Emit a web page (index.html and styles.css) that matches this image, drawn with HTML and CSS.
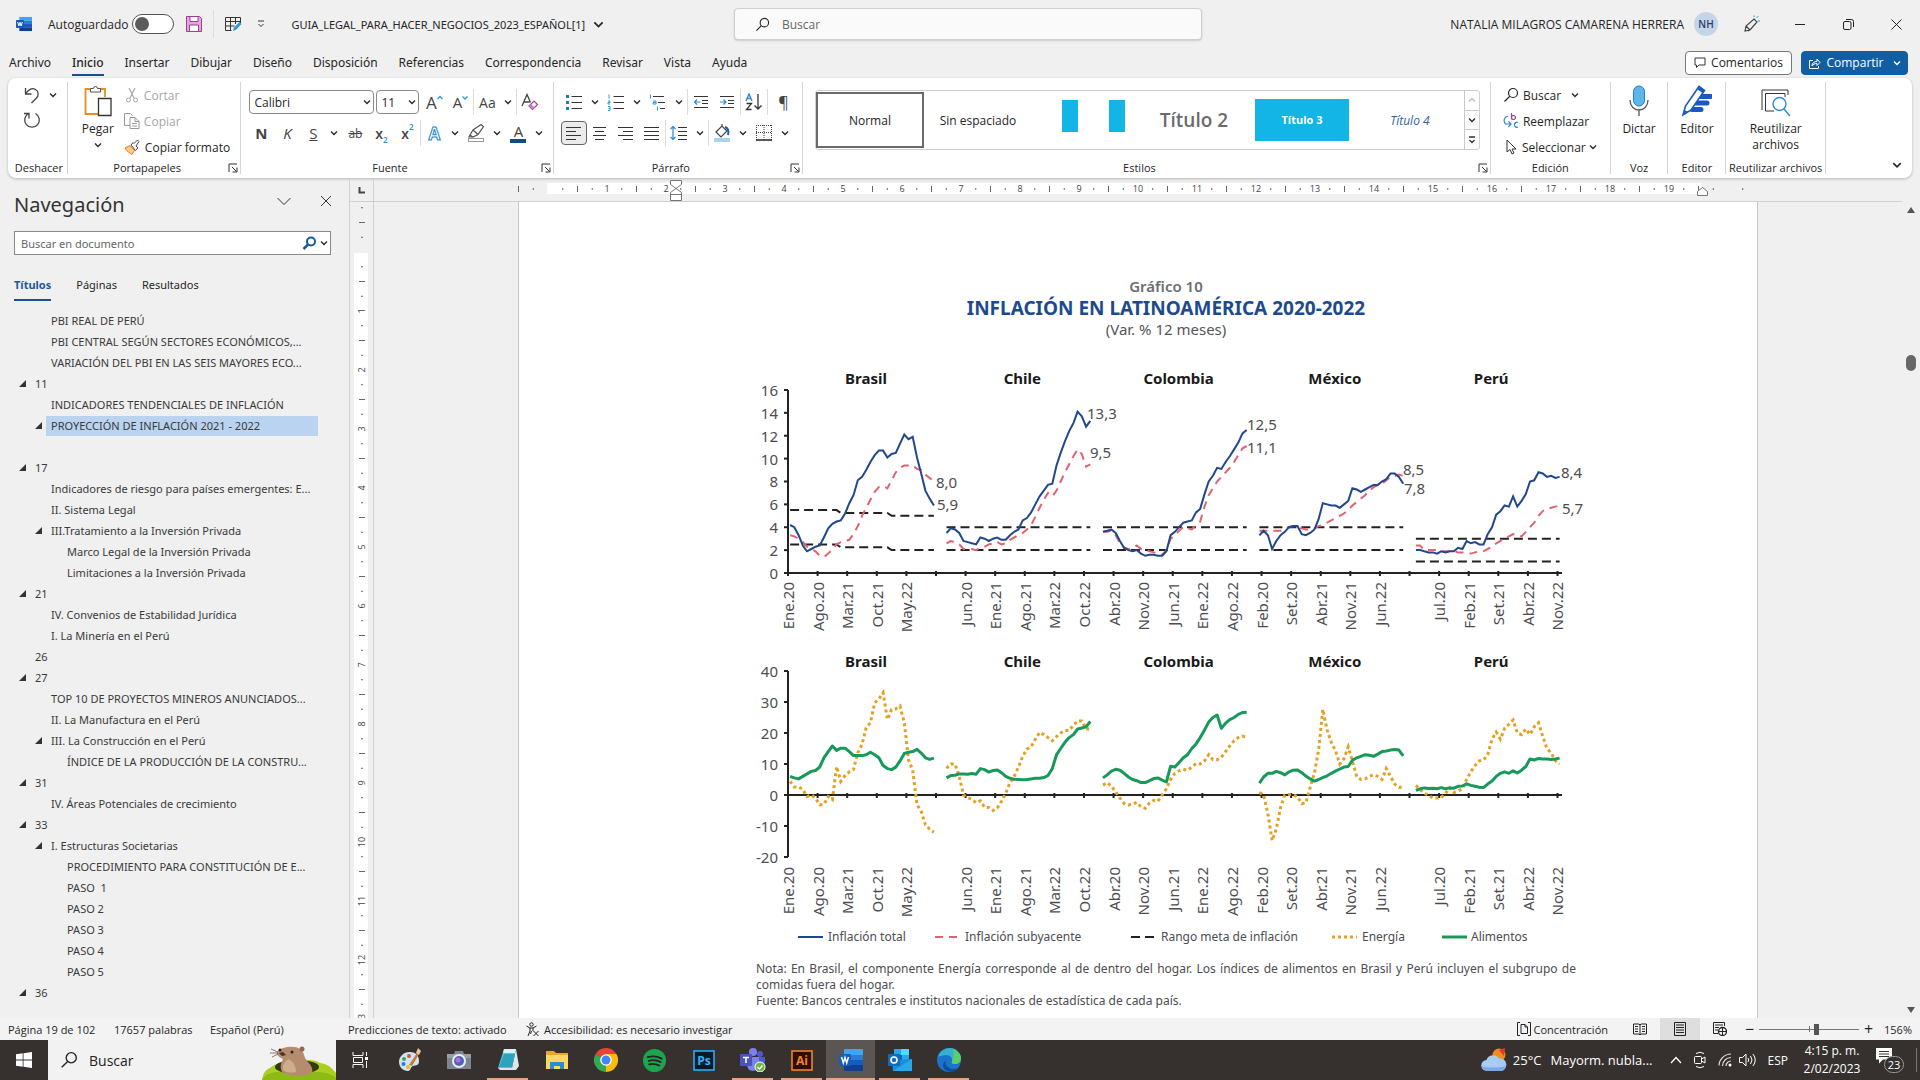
FILE: index.html
```html
<!DOCTYPE html>
<html lang="es">
<head>
  <meta charset="UTF-8" />
  <meta name="viewport" content="width=device-width, initial-scale=1.0" />
  <title>GUIA_LEGAL_PARA_HACER_NEGOCIOS_2023_ESPAÑOL[1]</title>
  <link rel="stylesheet" href="styles.css">
</head>
<body>

  <!-- Iconos compartidos -->
  <svg class="sprite" aria-hidden="true">
    <symbol id="chev" viewBox="0 0 8 8"><path d="M1 2.500 4 5.500 7 2.500" fill="none" stroke="currentColor" stroke-width="1.300"/></symbol>
    <symbol id="launcher" viewBox="0 0 10 10"><path d="M1 9V1h8M4 4l4.500 4.500M9 4.500V9H4.500" fill="none" stroke="#333"/></symbol>
    <symbol id="lupa" viewBox="0 0 16 16"><circle cx="10" cy="6" r="4.500" fill="none" stroke="currentColor" stroke-width="1.200"/><path d="M6.800 9.300 1.500 14.500" stroke="currentColor" stroke-width="1.200"/></symbol>
    <symbol id="word" viewBox="0 0 24 22">
      <path d="M6 0h17a1 1 0 0 1 1 1v5H5V1a1 1 0 0 1 1-1z" fill="#41a5ee"/>
      <path d="M5 6h19v5H5z" fill="#2b7cd3"/><path d="M5 11h19v5H5z" fill="#185abd"/>
      <path d="M5 16h19v5a1 1 0 0 1-1 1H6a1 1 0 0 1-1-1z" fill="#103f91"/>
      <rect y="5" width="12" height="12" rx="1" fill="#185abd"/>
      <path d="M2.500 8 4.300 14 6 8.500 7.700 14 9.500 8" fill="none" stroke="#fff" stroke-width="1.500"/>
    </symbol>
  </svg>

  <header class="titlebar">
    <svg class="app-icon" viewBox="0 0 24 22"><use href="#word"/></svg>
    <label class="autosave">Autoguardado <input type="checkbox" class="toggle"></label>
    <button class="qa qa-save" aria-label="Guardar">
      <svg width="16" height="16" viewBox="0 0 16 16"><path d="M.500.500h13l2 2v13H.500z" fill="#e3a6dc" stroke="#9b3f93"/><path d="M4 .500h8v5H4zM3.500 9h9v6.500h-9z" fill="#fff" stroke="#9b3f93"/></svg>
    </button>
    <span class="qa-sep"></span>
    <button class="qa" aria-label="Dibujar tabla">
      <svg width="17" height="16" viewBox="0 0 17 16"><path d="M.500 1.500h15v4H.500zM.500 5.500v9h6M.500 10h9M5.500 1.500v13M10.500 1.500V8M15.500 5v2" fill="none" stroke="#333"/><path d="M8 15l1-3.500L14.500 6l2 2L11 13.800z" fill="#2c9ad6"/></svg>
    </button>
    <button class="qa" aria-label="Personalizar barra">
      <svg width="8" height="8" viewBox="0 0 8 8"><path d="M1 1h6M1.500 4 4 6.500 6.500 4" fill="none" stroke="#333"/></svg>
    </button>
    <button class="doc-name">GUIA_LEGAL_PARA_HACER_NEGOCIOS_2023_ESPAÑOL[1] <svg width="11" height="11"><use href="#chev"/></svg></button>
    <div class="top-search">
      <svg width="15" height="15"><use href="#lupa"/></svg>
      <input type="text" placeholder="Buscar" aria-label="Buscar">
    </div>
    <div class="account">
      <span>NATALIA MILAGROS CAMARENA HERRERA</span>
      <span class="avatar">NH</span>
    </div>
    <button class="win" aria-label="Novedades"><svg width="18" height="18" viewBox="0 0 18 18"><path d="M2 16l1-5L11 4l3 3-7 8-5 1zM3 11l4 4M5 16l3-2" fill="none" stroke="#444" stroke-width="1.200"/><path d="M11 2V.500M13.500 3l2-2M15 6h2" stroke="#2c9ad6"/></svg></button>
    <button class="win" aria-label="Minimizar"><svg width="10" height="10"><path d="M0 5.500h10" stroke="#222"/></svg></button>
    <button class="win" aria-label="Restaurar"><svg width="11" height="11" viewBox="0 0 11 11"><rect x=".500" y="2.500" width="7.500" height="8" rx="1.500" fill="none" stroke="#222"/><path d="M3 .500h5.500a2 2 0 0 1 2 2V8" fill="none" stroke="#222"/></svg></button>
    <button class="win" aria-label="Cerrar"><svg width="11" height="11" viewBox="0 0 11 11"><path d="M.500.500l10 10M10.500.500l-10 10" stroke="#222"/></svg></button>
  </header>

  <nav class="tabs">
    <a href="#">Archivo</a>
    <a href="#" class="active">Inicio</a>
    <a href="#">Insertar</a>
    <a href="#">Dibujar</a>
    <a href="#">Diseño</a>
    <a href="#">Disposición</a>
    <a href="#">Referencias</a>
    <a href="#">Correspondencia</a>
    <a href="#">Revisar</a>
    <a href="#">Vista</a>
    <a href="#">Ayuda</a>
    <div class="tab-actions">
      <button class="comments"><svg width="12" height="12" viewBox="0 0 12 12"><path d="M1 1h10v7H5l-2.500 2.500V8H1z" fill="none" stroke="#333"/></svg>Comentarios</button>
      <button class="share"><svg width="13" height="13" viewBox="0 0 13 13"><path d="M5 3.500H1.500v8h9V9M4 9c0-3 2-4.500 5-4.500V2l3 3.500L9 8.500V6.500C7 6.500 5 7 4 9z" fill="none" stroke="#fff"/></svg>Compartir<svg width="8" height="8"><use href="#chev"/></svg></button>
    </div>
  </nav>

  <section class="ribbon">
    <div class="group g-undo">
      <div class="group-body undo-body">
        <div class="row">
          <button class="b" aria-label="Deshacer"><svg width="18" height="18" viewBox="0 0 18 18"><path d="M2.500 2v6h6M2.500 8C5 3.500 9 1.500 12.500 3.500S16 10 13 12.500L8.500 17" fill="none" stroke="#444" stroke-width="1.300"/></svg></button>
          <button class="ch" aria-label="Más"><svg width="8" height="8"><use href="#chev"/></svg></button>
        </div>
        <button class="b" aria-label="Rehacer"><svg width="18" height="18" viewBox="0 0 18 18"><path d="M12.500 2.500a7.300 7.300 0 1 1-7 0M1 2.500h5v5" fill="none" stroke="#444" stroke-width="1.300"/></svg></button>
      </div>
      <div class="group-name">Deshacer</div>
    </div>

    <div class="group g-clip">
      <div class="group-body clip-body">
        <button class="big">
          <svg width="28" height="32" viewBox="0 0 28 32"><path d="M6 4H1.500v25H14M16 4h5v8" fill="none" stroke="#ee8b26" stroke-width="1.800"/><path d="M6.500 7V3.500h3a2 2 0 0 1 4 0h3V7z" fill="#fff" stroke="#555"/><path d="M14.500 13.500h12.500v17H14.500z" fill="#fff" stroke="#333" stroke-width="1.300"/></svg>
          <span>Pegar</span>
          <svg width="8" height="8"><use href="#chev"/></svg>
        </button>
        <div class="stack">
          <button class="line off"><svg width="16" height="16" viewBox="0 0 16 16"><path d="M5 1l5 10M11 1 6 11" stroke="#aaa" stroke-width="1.300"/><circle cx="4.500" cy="13" r="2" fill="none" stroke="#aaa"/><circle cx="11.500" cy="13" r="2" fill="none" stroke="#aaa"/></svg>Cortar</button>
          <button class="line off"><svg width="16" height="16" viewBox="0 0 16 16"><path d="M6 12.500H.500v-12h6l2 2M6 4.500h5l4 4v7H6zM11 4.500v4h4M8 10.500h5M8 13h5" fill="none" stroke="#999"/></svg>Copiar</button>
          <button class="line"><svg width="17" height="16" viewBox="0 0 17 16"><path d="M1 9l5-2.500 4.500 5L8 15.500C6 14 3 13 1 9z" fill="#fbc98c" stroke="#e8820c"/><path d="M7 6l4.500 5.500L14 9l-2-2 3-4.500L13.500 1 10 4.500 9 3.500z" fill="#fff" stroke="#444"/></svg>Copiar formato</button>
        </div>
      </div>
      <div class="group-name has-launch">Portapapeles <svg class="launch" width="10" height="10"><use href="#launcher"/></svg></div>
    </div>

    <div class="group g-font">
      <div class="group-body rows">
        <div class="row row-font">
          <span class="combo combo-font"><select aria-label="Fuente"><option>Calibri</option></select><svg width="8" height="8"><use href="#chev"/></svg></span>
          <span class="combo combo-size"><select aria-label="Tamaño"><option>11</option></select><svg width="8" height="8"><use href="#chev"/></svg></span>
          <button class="b glyph">A<svg width="6" height="14" viewBox="0 0 6 14"><path d="M.500 4 3 1.500 5.500 4" fill="none" stroke="#2c9ad6" stroke-width="1.300"/></svg></button>
          <button class="b glyph small">A<svg width="6" height="14" viewBox="0 0 6 14"><path d="M.500 1.500 3 4 5.500 1.500" fill="none" stroke="#2c9ad6" stroke-width="1.300"/></svg></button>
          <span class="sep"></span>
          <button class="b glyph mid">Aa</button>
          <button class="ch" aria-label="Más"><svg width="8" height="8"><use href="#chev"/></svg></button>
          <span class="sep"></span>
          <button class="b" aria-label="Borrar formato"><svg width="18" height="18" viewBox="0 0 18 18"><path d="M1 13 6 1.500l3.500 8M2.500 9h6" fill="none" stroke="#444" stroke-width="1.300"/><path d="M8 13l5-5 3.500 3.500-5 5z" fill="#fff" stroke="#a0449b" stroke-width="1.200"/><path d="M8 13l2-2 3.500 3.500-2 2z" fill="#c37fbf"/></svg></button>
        </div>
        <div class="row row-format">
          <button class="b glyph bold">N</button>
          <button class="b glyph italic">K</button>
          <button class="b glyph under">S</button>
          <button class="ch" aria-label="Más"><svg width="8" height="8"><use href="#chev"/></svg></button>
          <button class="b glyph strike">ab</button>
          <button class="b glyph script">x<sub>2</sub></button>
          <button class="b glyph script">x<sup>2</sup></button>
          <span class="sep"></span>
          <button class="b glyph effect">A</button>
          <button class="ch" aria-label="Más"><svg width="8" height="8"><use href="#chev"/></svg></button>
          <button class="b" aria-label="Resaltar"><svg width="18" height="18" viewBox="0 0 18 18"><path d="M3 11l3-5 8-5.500 2.500 2-5.500 8-5 2.500zM6 6l4.500 4M3 11l-1 2h4" fill="none" stroke="#555" stroke-width="1.200"/><rect x="1.500" y="14.500" width="15" height="3" fill="#fff" stroke="#999"/></svg></button>
          <button class="ch" aria-label="Más"><svg width="8" height="8"><use href="#chev"/></svg></button>
          <button class="b glyph color">A</button>
          <button class="ch" aria-label="Más"><svg width="8" height="8"><use href="#chev"/></svg></button>
        </div>
      </div>
      <div class="group-name has-launch">Fuente <svg class="launch" width="10" height="10"><use href="#launcher"/></svg></div>
    </div>

    <div class="group g-par">
      <div class="group-body rows">
        <div class="row">
          <button class="b" aria-label="Viñetas"><svg width="17" height="17" viewBox="0 0 17 17"><path d="M1 2.500h3M1 8.500h3M1 14.500h3" stroke="#1b7f9e" stroke-width="3"/><path d="M6.500 2.500H17M6.500 8.500H17M6.500 14.500H17" stroke="#333"/></svg></button>
          <button class="ch" aria-label="Más"><svg width="8" height="8"><use href="#chev"/></svg></button>
          <button class="b" aria-label="Numeración"><svg width="17" height="17" viewBox="0 0 17 17"><path d="M2 .500v4M1 7h2v1.500H1V10h2M1 12.500h2v4H1M1.500 14.500H3" fill="none" stroke="#2c9ad6"/><path d="M6.500 2.500H17M6.500 8.500H17M6.500 14.500H17" stroke="#333"/></svg></button>
          <button class="ch" aria-label="Más"><svg width="8" height="8"><use href="#chev"/></svg></button>
          <button class="b" aria-label="Multinivel"><svg width="17" height="17" viewBox="0 0 17 17"><path d="M1.500.500v4M4 7h3v3H4V8.500h3M8.500 12.500v4" fill="none" stroke="#2c9ad6"/><path d="M4 2.500h11M9 8.500h7M11 14.500h5" stroke="#333"/></svg></button>
          <button class="ch" aria-label="Más"><svg width="8" height="8"><use href="#chev"/></svg></button>
          <span class="sep"></span>
          <button class="b" aria-label="Disminuir sangría"><svg width="16" height="14" viewBox="0 0 16 14"><path d="M1 1.500h14M9 5.500h6M9 8.500h6M1 12.500h14" stroke="#333"/><path d="M7.500 7H1.500M4 4.500 1.500 7 4 9.500" fill="none" stroke="#2c8ad6" stroke-width="1.200"/></svg></button>
          <button class="b" aria-label="Aumentar sangría"><svg width="16" height="14" viewBox="0 0 16 14"><path d="M1 1.500h14M9 5.500h6M9 8.500h6M1 12.500h14" stroke="#333"/><path d="M1 7h6M4.500 4.500 7 7 4.500 9.500" fill="none" stroke="#2c8ad6" stroke-width="1.200"/></svg></button>
          <span class="sep"></span>
          <button class="b" aria-label="Ordenar"><svg width="17" height="18" viewBox="0 0 17 18"><path d="M1 8l3-7 3 7M2 5.500h4" fill="none" stroke="#2c8ad6" stroke-width="1.400"/><path d="M1.500 10.500h5l-5 6h5M13 1v15M9.500 12.500 13 16l3.500-3.500" fill="none" stroke="#333" stroke-width="1.300"/></svg></button>
          <span class="sep"></span>
          <button class="b glyph pilcrow">¶</button>
        </div>
        <div class="row">
          <button class="b pressed" aria-label="Alinear a la izquierda"><svg width="15" height="15" viewBox="0 0 15 15"><path d="M0 1.500h15M0 5.500h10M0 9.500h15M0 13.500h10" stroke="#333"/></svg></button>
          <button class="b" aria-label="Centrar"><svg width="15" height="15" viewBox="0 0 15 15"><path d="M1 1.500h13M3 5.500h9M1 9.500h13M3 13.500h9" stroke="#333"/></svg></button>
          <button class="b" aria-label="Alinear a la derecha"><svg width="15" height="15" viewBox="0 0 15 15"><path d="M0 1.500h15M5 5.500h10M0 9.500h15M5 13.500h10" stroke="#333"/></svg></button>
          <button class="b" aria-label="Justificar"><svg width="15" height="15" viewBox="0 0 15 15"><path d="M0 1.500h15M0 5.500h15M0 9.500h15M0 13.500h15" stroke="#333"/></svg></button>
          <span class="sep"></span>
          <button class="b" aria-label="Interlineado"><svg width="17" height="16" viewBox="0 0 17 16"><path d="M8 2.500h9M8 6.500h9M8 10.500h9M8 14.500h9" stroke="#333"/><path d="M3 1v14M.500 4 3 1.500 5.500 4M.500 12 3 14.500 5.500 12" fill="none" stroke="#2c8ad6" stroke-width="1.200"/></svg></button>
          <button class="ch" aria-label="Más"><svg width="8" height="8"><use href="#chev"/></svg></button>
          <span class="sep"></span>
          <button class="b" aria-label="Sombreado"><svg width="18" height="18" viewBox="0 0 18 18"><path d="M3 8l6-6 5 5-6 6zM9 2V0" fill="none" stroke="#444" stroke-width="1.200"/><path d="M12 3c3 1 4 4 3 8" fill="none" stroke="#185abd" stroke-width="2"/><rect x="1" y="14" width="16" height="4" fill="#a9d3ee"/></svg></button>
          <button class="ch" aria-label="Más"><svg width="8" height="8"><use href="#chev"/></svg></button>
          <button class="b" aria-label="Bordes"><svg width="16" height="16" viewBox="0 0 16 16"><path d="M.500 0v15M15.500 0v15M0 .500h16M8 0v15M0 7.500h16" fill="none" stroke="#444" stroke-dasharray="1 1"/><path d="M0 15h16" stroke="#222" stroke-width="1.500"/></svg></button>
          <button class="ch" aria-label="Más"><svg width="8" height="8"><use href="#chev"/></svg></button>
        </div>
      </div>
      <div class="group-name has-launch">Párrafo <svg class="launch" width="10" height="10"><use href="#launcher"/></svg></div>
    </div>

    <div class="group g-styles">
      <div class="group-body">
        <div class="gallery">
          <button class="style selected">Normal</button>
          <button class="style">Sin espaciado</button>
          <button class="style bars" aria-label="Título 1"><i></i><i></i></button>
          <button class="style t2">Título 2</button>
          <button class="style t3"><span>Título 3</span></button>
          <button class="style t4">Título 4</button>
          <div class="gallery-scroll">
            <button disabled aria-label="Arriba"><svg class="flip" width="8" height="8"><use href="#chev"/></svg></button>
            <button aria-label="Abajo"><svg width="8" height="8"><use href="#chev"/></svg></button>
            <button aria-label="Más estilos"><svg width="8" height="8" viewBox="0 0 8 8"><path d="M1 1h6M1.500 4 4 6.500 6.500 4" fill="none" stroke="#333" stroke-width="1.300"/></svg></button>
          </div>
        </div>
      </div>
      <div class="group-name has-launch">Estilos <svg class="launch" width="10" height="10"><use href="#launcher"/></svg></div>
    </div>

    <div class="group g-edit">
      <div class="group-body">
        <div class="stack">
          <button class="line"><svg width="16" height="16"><use href="#lupa"/></svg>Buscar<svg class="far" width="8" height="8"><use href="#chev"/></svg></button>
          <button class="line"><svg width="16" height="16" viewBox="0 0 16 16"><path d="M8.500 0v6.500M8.500 4a2 2 0 1 1 0 1" fill="none" stroke="#a0449b" stroke-width="1.200"/><path d="M15 9.500a2.500 2.500 0 1 0 0 4.500M5 3C1 4 0 8 2.500 11h5M5.500 8.500 8 11l-2.500 3" fill="none" stroke="#2c8ad6" stroke-width="1.200"/></svg>Reemplazar</button>
          <button class="line tight"><svg width="16" height="16" viewBox="0 0 16 16"><path d="M4 1v12l3-2.500 2 4.500 2-1-2-4h4z" fill="#fff" stroke="#333"/></svg>Seleccionar<svg width="8" height="8"><use href="#chev"/></svg></button>
        </div>
      </div>
      <div class="group-name">Edición</div>
    </div>

    <div class="group g-small">
      <div class="group-body">
        <button class="big">
          <svg width="20" height="32" viewBox="0 0 20 32"><rect x="4.500" y="1" width="11" height="20" rx="5.500" fill="#5db6ea" stroke="#2281c4"/><path d="M1 15c0 6 4 10 9 10s9-4 9-10M10 25v6" fill="none" stroke="#555" stroke-width="1.300"/></svg>
          <span>Dictar</span>
        </button>
      </div>
      <div class="group-name">Voz</div>
    </div>

    <div class="group g-small">
      <div class="group-body">
        <button class="big">
          <svg width="30" height="32" viewBox="0 0 30 32"><path d="M18 11.500h11M14 18h11M10 24.500h9" stroke="#185abd" stroke-width="5" stroke-linecap="round"/><path d="M1 30l2.500-9L17 1.500l5.500 4L9 25z" fill="#fff" stroke="#185abd" stroke-width="1.600"/><path d="M1 30l1.500-5 3.500 2zM15 4l2-3 5.500 4-2 3z" fill="#185abd"/></svg>
          <span>Editor</span>
        </button>
      </div>
      <div class="group-name">Editor</div>
    </div>

    <div class="group g-reuse">
      <div class="group-body">
        <button class="big">
          <svg width="30" height="32" viewBox="0 0 30 32"><path d="M1 25V5h26v5" fill="none" stroke="#333"/><path d="M13 26H4.500V8.500H24V12" fill="none" stroke="#333"/><circle cx="18.500" cy="19" r="6.500" fill="#fff" stroke="#2c8ad6" stroke-width="1.400"/><path d="M23 24l6 7" stroke="#2c8ad6" stroke-width="1.400"/></svg>
          <span>Reutilizar<br>archivos</span>
        </button>
      </div>
      <div class="group-name">Reutilizar archivos</div>
    </div>
    <button class="collapse" aria-label="Contraer"><svg width="10" height="10"><use href="#chev"/></svg></button>
  </section>

  <main class="workspace">
    <aside class="nav-pane">
      <div class="nav-head">
        <h2>Navegación</h2>
        <button aria-label="Opciones"><svg width="16" height="16" viewBox="0 0 16 16"><path d="M1.500 5 8 11.500 14.500 5" fill="none" stroke="#333"/></svg></button>
        <button aria-label="Cerrar panel"><svg width="12" height="12" viewBox="0 0 12 12"><path d="M1 1l10 10M11 1 1 11" stroke="#333"/></svg></button>
      </div>
      <div class="nav-search">
        <input type="text" placeholder="Buscar en documento" aria-label="Buscar en documento">
        <svg class="find" width="15" height="15" viewBox="0 0 15 15"><circle cx="9" cy="5.500" r="4" fill="none" stroke="#185a9d" stroke-width="2"/><path d="M6 8.500 1.500 13" stroke="#185a9d" stroke-width="2.500"/></svg>
        <svg width="8" height="8"><use href="#chev"/></svg>
      </div>
      <div class="nav-tabs">
        <a href="#" class="active">Títulos</a>
        <a href="#">Páginas</a>
        <a href="#">Resultados</a>
      </div>
      <ul class="tree">
        <li class="l2"><a href="#">PBI REAL DE PERÚ</a></li>
        <li class="l2"><a href="#">PBI CENTRAL SEGÚN SECTORES ECONÓMICOS,...</a></li>
        <li class="l2"><a href="#">VARIACIÓN DEL PBI EN LAS SEIS MAYORES ECO...</a></li>
        <li class="l1 open"><a href="#">11</a></li>
        <li class="l2"><a href="#">INDICADORES TENDENCIALES DE INFLACIÓN</a></li>
        <li class="l2 open current"><a href="#">PROYECCIÓN DE INFLACIÓN 2021 - 2022</a></li>
        <li></li>
        <li class="l1 open"><a href="#">17</a></li>
        <li class="l2"><a href="#">Indicadores de riesgo para países emergentes: E...</a></li>
        <li class="l2"><a href="#">II. Sistema Legal</a></li>
        <li class="l2 open"><a href="#">III.Tratamiento a la Inversión Privada</a></li>
        <li class="l3"><a href="#">Marco Legal de la Inversión Privada</a></li>
        <li class="l3"><a href="#">Limitaciones a la Inversión Privada</a></li>
        <li class="l1 open"><a href="#">21</a></li>
        <li class="l2"><a href="#">IV. Convenios de Estabilidad Jurídica</a></li>
        <li class="l2"><a href="#">I. La Minería en el Perú</a></li>
        <li class="l1"><a href="#">26</a></li>
        <li class="l1 open"><a href="#">27</a></li>
        <li class="l2"><a href="#">TOP 10 DE PROYECTOS MINEROS ANUNCIADOS...</a></li>
        <li class="l2"><a href="#">II. La Manufactura en el Perú</a></li>
        <li class="l2 open"><a href="#">III. La Construcción en el Perú</a></li>
        <li class="l3"><a href="#">ÍNDICE DE LA PRODUCCIÓN DE LA CONSTRU...</a></li>
        <li class="l1 open"><a href="#">31</a></li>
        <li class="l2"><a href="#">IV. Áreas Potenciales de crecimiento</a></li>
        <li class="l1 open"><a href="#">33</a></li>
        <li class="l2 open"><a href="#">I. Estructuras Societarias</a></li>
        <li class="l3"><a href="#">PROCEDIMIENTO PARA CONSTITUCIÓN DE E...</a></li>
        <li class="l3"><a href="#">PASO&nbsp; 1</a></li>
        <li class="l3"><a href="#">PASO 2</a></li>
        <li class="l3"><a href="#">PASO 3</a></li>
        <li class="l3"><a href="#">PASO 4</a></li>
        <li class="l3"><a href="#">PASO 5</a></li>
        <li class="l1 open"><a href="#">36</a></li>
      </ul>
    </aside>

    <div class="v-ruler">
      <div class="corner"><svg width="7" height="7"><path d="M1.500 0v5.500H7" fill="none" stroke="#444" stroke-width="2"/></svg></div>
      <svg id="rulerV" width="24" height="816"></svg>
    </div>

    <div class="canvas">
      <div class="h-ruler"><svg id="rulerH" width="1240" height="21"></svg></div>
      <article class="page">
        <h3>Gráfico 10</h3>
        <h1>INFLACIÓN EN LATINOAMÉRICA 2020-2022</h1>
        <p class="unit">(Var. % 12 meses)</p>
        <svg id="charts" class="charts" width="860" height="614" viewBox="0 0 860 614"></svg>
        <div class="notes">
          <p>Nota: En Brasil, el componente Energía corresponde al de dentro del hogar. Los índices de alimentos en Brasil y Perú incluyen el subgrupo de comidas fuera del hogar.</p>
          <p>Fuente: Bancos centrales e institutos nacionales de estadística de cada país.</p>
        </div>
      </article>
    </div>

    <div class="scrollbar">
      <svg width="10" height="8"><path d="M5 1l4 6H1z" fill="#555"/></svg>
      <span class="thumb"></span>
      <svg class="down" width="10" height="8"><path d="M5 7 1 1h8z" fill="#555"/></svg>
    </div>
  </main>

  <footer class="status">
    <span class="s-page">Página 19 de 102</span>
    <span class="s-words">17657 palabras</span>
    <span class="s-lang">Español (Perú)</span>
    <span class="s-pred">Predicciones de texto: activado</span>
    <span class="s-acc"><svg width="15" height="15" viewBox="0 0 15 15"><circle cx="6.500" cy="2.500" r="1.700" fill="none" stroke="#222"/><path d="M1.500 4l3.500 2v3l-2 5M11.500 4 8 6v3M5 6h3M6.500 9l-1 3M8.500 9l5 5M13.500 9l-5 5" fill="none" stroke="#222"/></svg>Accesibilidad: es necesario investigar</span>
    <div class="views">
      <button class="focus"><svg width="14" height="14" viewBox="0 0 14 14"><path d="M3 .500H.500v13H3M11 .500h2.500v13H11M4 2.500h4l2.500 2.500v6.500H4zM8 2.500V5h2.500" fill="none" stroke="#222"/></svg>Concentración</button>
      <button class="view" aria-label="Lectura"><svg width="14" height="13" viewBox="0 0 14 13"><path d="M.500 1H6l1 1 1-1h5.500v10H8l-1 1-1-1H.500zM7 2v10M2 3.500h3M2 6h3M2 8.500h3M9 3.500h3M9 6h3M9 8.500h3" fill="none" stroke="#222"/></svg></button>
      <button class="view on" aria-label="Diseño de impresión"><svg width="12" height="14" viewBox="0 0 12 14"><path d="M.500.500h11v13H.500zM2 3h8M2 5.500h8M2 8h8M2 10.500h8" fill="none" stroke="#222"/></svg></button>
      <button class="view" aria-label="Diseño web"><svg width="14" height="14" viewBox="0 0 14 14"><path d="M5 11.500H.500v-11h11V4M2 3h8M2 5.500h4M2 8h3" fill="none" stroke="#222"/><circle cx="9.500" cy="9.500" r="4" fill="#f3f3f3" stroke="#222" stroke-width="1.300"/><path d="M5.500 9.500h8M9.500 5.500v8" stroke="#222"/></svg></button>
      <button class="step">−</button>
      <input type="range" class="zoom" min="10" max="190" value="114" aria-label="Zoom">
      <button class="step">+</button>
      <button class="pct">156%</button>
    </div>
  </footer>

  <div class="taskbar">
    <button class="start" aria-label="Inicio"><svg width="16" height="16" viewBox="0 0 16 16"><path d="M0 2.300 6.700 1.300v6.200H0zM7.500 1.200 16 0v7.500H7.500zM0 8.400h6.700v6.300L0 13.700zM7.500 8.400H16V16l-8.500-1.200z" fill="#fff"/></svg></button>
    <div class="task-search">
      <svg width="18" height="18"><use href="#lupa"/></svg>
      <input type="text" placeholder="Buscar" aria-label="Buscar en Windows">
      <svg class="marmot" width="74" height="34" viewBox="0 0 74 34">
        <path d="M0 34c1-6 3-10 8-12 5-4 12-7 22-7 12-2 22-2 28 2 8 1 12 5 16 10v7z" fill="#a9cf1f"/>
        <path d="M0 34c2-5 8-7 14-8h44c8 1 13 3 16 6v2z" fill="#8dba15"/>
        <ellipse cx="35" cy="21" rx="22" ry="7" fill="#35380f"/>
        <path d="M20 26c-3-7 0-10 1-13-4-2-8-5-5-8 3-4 17-6 22-2 5 3 3 8 8 13 4 4 5 8 4 11-8 4-22 4-30-1z" fill="#b58d6e"/>
        <path d="M21 24c-1-5 2-8 5-11 5 2 8 7 8 13-4 1-10 1-13-2z" fill="#cfae90"/>
        <circle cx="18" cy="4" r="1.500" fill="#2b211b"/><circle cx="30" cy="6" r="1.500" fill="#2b211b"/><circle cx="40" cy="3" r="2.500" fill="#8e6a50"/>
        <path d="M17 7l4-1 3 3-4 1z" fill="#4a3128"/><path d="M9 3l7 3M8 7h8M10 11l6-3" stroke="#5b4034" stroke-width=".700"/>
      </svg>
    </div>
    <div class="apps">
      <button class="app" aria-label="Vista de tareas"><svg width="17" height="16" viewBox="0 0 17 16"><path d="M1 0v3.500h10V0M1 16v-3.500h10V16M1.500 5.500h9v5h-9zM14.500 0v4M14.500 9v7" fill="none" stroke="#fff"/><rect x="13" y="5" width="3" height="3" fill="#fff"/></svg></button>
      <button class="app" aria-label="Paint"><svg width="24" height="24" viewBox="0 0 24 24"><path d="M12 4C5 4 1 9 1 14s4 9 9 9c3 0 2-4 5-5s6 0 6-5c0-6-4-9-9-9z" fill="#cfe4f2"/><circle cx="6" cy="11" r="2" fill="#3aa655"/><circle cx="11" cy="8" r="2" fill="#e9483f"/><circle cx="5.500" cy="16" r="2" fill="#2a7de1"/><circle cx="10" cy="19" r="2" fill="#f5b921"/><path d="M11 17 19 5l2 1-7 12z" fill="#c47b3a"/><path d="M18 5l2-5 3 3-2 4z" fill="#eac79b"/></svg></button>
      <button class="app" aria-label="Cámara"><svg width="24" height="24" viewBox="0 0 24 24"><path d="M8 3h8l1 3h7v15H0V6h7z" fill="#7d858e"/><path d="M0 6h24v4H0z" fill="#97a0a9"/><circle cx="12" cy="13" r="7" fill="#eceff2"/><circle cx="12" cy="13" r="5" fill="#4d63b8"/><circle cx="11" cy="12" r="2.500" fill="#b46fd0"/></svg></button>
      <button class="app running" aria-label="Notas"><svg width="24" height="24" viewBox="0 0 24 24"><path d="M8 1h12l-4 19H2z" fill="#5cc3d6"/><path d="M8 1h12l-1 4H7z" fill="#d9f2f6"/><path d="M20 1l3 17-3 4H4l-2-2h14z" fill="#dfe6e8"/><path d="M3 19 8 6h11l-3 13z" fill="#2fa3bd"/></svg></button>
      <button class="app" aria-label="Explorador"><svg width="22" height="20" viewBox="0 0 22 20"><path d="M0 1h8l2 2h12v16H0z" fill="#e9a825"/><path d="M0 5h22v14H0z" fill="#ffd766"/><path d="M4 19v-7h14v7h-4v-3H8v3z" fill="#2e8bd0"/></svg></button>
      <button class="app" aria-label="Chrome"><svg width="24" height="24" viewBox="0 0 24 24"><path d="M12 12 1.600 6A12 12 0 0 1 22.400 6z" fill="#ea4335"/><path d="M12 12 22.400 6A12 12 0 0 1 12 24z" fill="#fbbc05"/><path d="M12 12v12A12 12 0 0 1 1.600 6z" fill="#34a853"/><path d="M12 6h10.400L17 15z" fill="#fbbc05"/><circle cx="12" cy="12" r="5.800" fill="#fff"/><circle cx="12" cy="12" r="4.500" fill="#4285f4"/></svg></button>
      <button class="app" aria-label="Spotify"><svg width="23" height="23" viewBox="0 0 24 24"><circle cx="12" cy="12" r="12" fill="#1ca54e"/><path d="M5 8.500c5-1.500 10-1 14.500 1.500M6 12.300c4-1.200 8.500-.800 12.300 1.300M6.500 16c3.500-1 7-.600 10.500 1.200" fill="none" stroke="#222" stroke-width="1.900" stroke-linecap="round"/></svg></button>
      <button class="app" aria-label="Photoshop"><svg width="22" height="21" viewBox="0 0 22 21"><rect x="1" y="1" width="20" height="19" fill="#06182a" stroke="#23b1f0" stroke-width="1.600"/><text x="11" y="15" class="logo" fill="#31b5f5">Ps</text></svg></button>
      <button class="app running" aria-label="Teams"><svg width="26" height="24" viewBox="0 0 26 24"><circle cx="20" cy="6" r="3" fill="#5059c9"/><circle cx="13" cy="4" r="4" fill="#7b83eb"/><path d="M16 9h9v7a4.500 4.500 0 0 1-9 0z" fill="#5059c9"/><path d="M7 9h12v8a6 6 0 0 1-12 0z" fill="#7b83eb"/><rect x="0" y="6" width="12" height="12" rx="1" fill="#4b53bc"/><path d="M3 9.500h6M6 9.500V15" stroke="#fff" stroke-width="1.600"/><circle cx="20" cy="19" r="5" fill="#6bb544" stroke="#fff"/><path d="M17.500 19l2 2 3-3.500" fill="none" stroke="#fff" stroke-width="1.400"/></svg></button>
      <button class="app running" aria-label="Illustrator"><svg width="22" height="21" viewBox="0 0 22 21"><rect x="1" y="1" width="20" height="19" fill="#2b0f04" stroke="#f58220" stroke-width="1.600"/><text x="11" y="15" class="logo" fill="#f58220">Ai</text></svg></button>
      <button class="app running focused" aria-label="Word"><svg width="24" height="22"><use href="#word"/></svg></button>
      <button class="app running" aria-label="Outlook"><svg width="24" height="22" viewBox="0 0 24 22"><path d="M6 0h15v13H6z" fill="#28a8ea"/><path d="M13 0h8v6h-8z" fill="#50d9ff"/><path d="M6 6h8v7H6z" fill="#0364b8"/><path d="M4 11l20-1v11a1 1 0 0 1-1 1H5z" fill="#1490df"/><path d="M24 10 5 22h18a1 1 0 0 0 1-1z" fill="#28a8ea"/><rect y="5" width="12" height="12" rx="1" fill="#0f6cbd"/><circle cx="6" cy="11" r="3" fill="none" stroke="#fff" stroke-width="1.600"/></svg></button>
      <button class="app running" aria-label="Edge"><svg width="24" height="24" viewBox="0 0 24 24"><circle cx="12" cy="12" r="12" fill="#1b74c9"/><path d="M1 9C3 3 8 0 13 0c6 0 11 5 11 10 0 4-3 6-6 6-3 0-4-1-3-3 1-3-2-6-6-6-3 0-6 1-8 2z" fill="#35b1d0"/><path d="M16 1c5 2 8 6 8 9 0 4-3 6-6 6-3 0-4-1-3-3 2-4 2-8 1-12z" fill="#5bd06a"/><path d="M9 12c-2 5 2 9 7 9 3 0 5-1 6-2-3 5-8 6-12 4-5-2-5-8-1-11z" fill="#0c4f9e"/></svg></button>
    </div>
    <div class="tray">
      <svg width="26" height="24" viewBox="0 0 26 24"><circle cx="18" cy="7" r="6.500" fill="#f38b1e"/><path d="M18 2l6-2-1 8z" fill="#e5382a"/><path d="M6 23a5.500 5.500 0 0 1-.500-11A7 7 0 0 1 18 10.500 6 6 0 0 1 20 23z" fill="#a9cdf2"/><path d="M6 23c-3-1-5-3-5-5 5 2 16 2 24 0-1 3-3 5-5 5z" fill="#7ba9e3"/></svg>
      <span class="weather">25°C</span>
      <span class="weather desc">Mayorm. nubla...</span>
      <svg class="up" width="12" height="8" viewBox="0 0 12 8"><path d="M1 7l5-5.500L11 7" fill="none" stroke="#fff" stroke-width="1.300"/></svg>
      <svg class="meet" width="12" height="18" viewBox="0 0 12 18"><rect x=".500" y="5.500" width="7" height="7" rx="1" fill="none" stroke="#fff"/><path d="M7.500 8 11 6v6L7.500 10M2 2.500Q6 0 10 2.500M2 15.500q4 2.500 8 0" fill="none" stroke="#fff"/></svg>
      <svg class="wifi" width="14" height="14" viewBox="0 0 14 14"><path d="M1 12.500A12 12 0 0 1 13 1M4.500 13A8.500 8.500 0 0 1 13 4.500M8 13a5 5 0 0 1 5-5" fill="none" stroke="#ddd" stroke-width="1.200"/><circle cx="12" cy="12" r="1.500" fill="#fff"/></svg>
      <svg class="vol" width="17" height="14" viewBox="0 0 17 14"><path d="M.500 4.500h3L7 1v12L3.500 9.500h-3zM9 5q1.500 2 0 4M11.500 3q3 4 0 8M14 1q4.500 6 0 12" fill="none" stroke="#fff"/></svg>
      <span class="lang">ESP</span>
      <span class="clock">4:15 p. m.<br>2/02/2023</span>
      <span class="notif"><svg width="17" height="17" viewBox="0 0 17 17"><path d="M0 0h16v11.500H7L3 15.500V11.500H0z" fill="#fff"/><path d="M3 3.500h10M3 6h10M3 8.500h10" stroke="#36312f"/></svg><b>23</b></span>
    </div>
  </div>

  <script src="script.js"></script>
</body>
</html>
```
FILE: styles.css
```css
* {
  box-sizing: border-box;
}

body {
  margin: 0;
  height: 100vh;
  display: flex;
  flex-direction: column;
  overflow: hidden;
  font-family: "Open Sans", "Noto Sans", sans-serif;
  font-size: 12px;
  color: #262626;
  background: #f0f0f0;
}

button,
input,
select {
  font: inherit;
  color: inherit;
}

button {
  display: flex;
  align-items: center;
  justify-content: center;
  padding: 0;
  border: none;
  background: none;
  white-space: nowrap;
}

a {
  color: inherit;
  text-decoration: none;
}

svg {
  flex: none;
}

.sprite {
  position: absolute;
  width: 0;
  height: 0;
}

/* Barra de título */
.titlebar {
  position: relative;
  display: flex;
  align-items: center;
  height: 48px;
  padding-left: 16px;
  flex: none;
}

.app-icon {
  width: 16px;
  height: 16px;
  margin-right: 16px;
}

.autosave {
  display: flex;
  align-items: center;
  gap: 4px;
  margin-right: 6px;
}

.toggle {
  appearance: none;
  width: 42px;
  height: 20px;
  margin: 0;
  border: 1px solid #555;
  border-radius: 10px;
  background: #fff;
}

.toggle::before {
  content: "";
  display: block;
  width: 14px;
  height: 14px;
  margin: 2px;
  border-radius: 50%;
  background: #5c5c5c;
}

.qa {
  width: 28px;
  height: 28px;
}

.qa-sep {
  width: 1px;
  height: 28px;
  margin: 0 5px;
  background: #dcdcdc;
}

.doc-name {
  gap: 8px;
  margin-left: 16px;
  font-family: "Noto Sans", sans-serif;
  font-size: 11px;
}

.top-search {
  position: absolute;
  left: 50%;
  top: 8px;
  width: 468px;
  height: 32px;
  margin-left: -226px;
  display: flex;
  align-items: center;
  gap: 12px;
  padding-left: 20px;
  background: #fafafa;
  border: 1px solid #cfcfcf;
  border-radius: 4px;
  box-shadow: 0 1px 2px rgba(0, 0, 0, 0.15);
}

.top-search input,
.nav-search input,
.task-search input {
  flex: 1;
  min-width: 0;
  padding: 0;
  border: none;
  background: none;
}

.top-search input::placeholder,
.nav-search input::placeholder {
  color: #666;
}

.account {
  display: flex;
  align-items: center;
  gap: 10px;
  margin-left: auto;
  margin-right: 10px;
}

.avatar {
  width: 24px;
  height: 24px;
  line-height: 24px;
  border-radius: 50%;
  background: #c5d5e8;
  color: #1f3f6e;
  font-size: 10px;
  font-weight: 600;
  text-align: center;
}

.win {
  width: 48px;
  height: 48px;
}

/* Pestañas */
.tabs {
  display: flex;
  gap: 21px;
  height: 30px;
  padding: 0 12px 3px 9px;
  flex: none;
  font-family: "Noto Sans", sans-serif;
  line-height: 30px;
}

.tabs .active {
  height: 28px;
  font-weight: 500;
  border-bottom: 2px solid #1b4f8f;
}

.tab-actions {
  display: flex;
  gap: 9px;
  margin-left: auto;
  margin-top: 3px;
  font-family: "Open Sans", sans-serif;
}

.comments,
.share {
  gap: 5px;
  width: 107px;
  height: 24px;
  border: 1px solid #777;
  border-radius: 4px;
  background: #fff;
}

.share {
  border-color: #115ea3;
  background: #115ea3;
  color: #fff;
}

.share svg:last-child {
  margin-left: 4px;
}

/* Cinta */
.ribbon {
  display: flex;
  flex: none;
  height: 100px;
  margin: 0 8px 2px;
  padding-top: 4px;
  background: #fff;
  border-radius: 8px;
  box-shadow: 0 1px 3px rgba(0, 0, 0, 0.25);
}

.group {
  display: flex;
  flex-direction: column;
  height: 92px;
  border-right: 1px solid #d4d4d4;
}

.group-body {
  display: flex;
  height: 76px;
  flex: none;
}

.group-name {
  position: relative;
  height: 20px;
  line-height: 20px;
  flex: none;
  text-align: center;
  font-size: 11px;
  white-space: nowrap;
}

.has-launch {
  padding-right: 14px;
}

.launch {
  position: absolute;
  right: 2px;
  top: 5px;
}

.g-undo {
  width: 60px;
  padding-left: 3px;
}

.g-clip {
  width: 174px;
}

.g-font {
  width: 313px;
}

.g-par {
  width: 250px;
}

.g-styles {
  flex: 1;
}

.g-edit {
  width: 120px;
}

.g-small {
  width: 58px;
}

.g-reuse {
  width: 100px;
}

.row {
  display: flex;
  align-items: center;
  height: 26px;
}

.rows {
  flex-direction: column;
  gap: 5px;
  padding: 7px 0 0 7px;
}

.b {
  width: 26px;
  height: 24px;
}

.ch {
  width: 16px;
  height: 24px;
}

.sep {
  width: 1px;
  height: 26px;
  background: #dcdcdc;
}

.undo-body {
  flex-direction: column;
  padding-left: 8px;
}

.clip-body {
  padding-left: 10px;
}

.big {
  flex: 1;
  flex-direction: column;
  justify-content: flex-start;
  gap: 4px;
  padding-top: 3px;
  line-height: 16px;
}

.clip-body .big {
  flex: none;
  width: 40px;
}

.stack {
  display: flex;
  flex-direction: column;
  padding-left: 6px;
}

.line {
  justify-content: flex-start;
  gap: 4px;
  height: 26px;
  flex: none;
}

.tight {
  gap: 3px;
}

.off {
  color: #a6a6a6;
}

.g-edit .stack {
  padding-left: 12px;
}

.far {
  margin-left: 6px;
}

.combo {
  position: relative;
  height: 24px;
}

.combo select {
  appearance: none;
  width: 100%;
  height: 24px;
  padding: 0 4px;
  border: 1px solid #8a8a8a;
  border-radius: 4px;
  background: #fff;
}

.combo svg {
  position: absolute;
  right: 3px;
  top: 8px;
}

.combo-font {
  width: 125px;
  margin-right: 2px;
}

.combo-size {
  width: 43px;
  margin-right: 2px;
}

.row-font {
  padding-left: 1px;
}

.glyph {
  font-size: 17px;
  color: #444;
}

.small {
  font-size: 15px;
}

.mid {
  font-size: 14px;
}

.bold {
  font-size: 15px;
  font-weight: 700;
}

.italic {
  font-size: 15px;
  font-style: italic;
}

.under {
  font-size: 15px;
  text-decoration: underline;
}

.strike {
  font-size: 12px;
  text-decoration: line-through;
}

.script {
  font-size: 14px;
  font-weight: 600;
}

.script sub,
.script sup {
  font-size: 8px;
  color: #2c8ad6;
}

.script sub {
  align-self: flex-end;
}

.script sup {
  align-self: flex-start;
}

.effect {
  font-weight: 700;
  color: #fff;
  -webkit-text-stroke: 1px #1b86c9;
}

.color {
  height: 20px;
  line-height: 16px;
  font-size: 15px;
  border-bottom: 4px solid #124c82;
  width: 16px;
  margin: 0 5px;
}

.pilcrow {
  margin-left: 3px;
  font-size: 16px;
}

.pressed {
  border: 1px solid #666;
  border-radius: 4px;
  background: #ebebeb;
}

.gallery {
  display: flex;
  flex: 1;
  height: 60px;
  margin: 8px 10px 0 12px;
  border: 1px solid #d0d0d0;
  border-radius: 3px;
}

.style {
  width: 108px;
  margin: 1px 0;
}

.selected {
  border: 2px solid #6a6a6a;
}

.bars {
  gap: 31px;
  padding: 0 0 8px 16px;
}

.bars i {
  width: 16px;
  height: 32px;
  background: #12b5e5;
}

.t2 {
  font-size: 19px;
  font-weight: 600;
  color: #6b6b6b;
}

.t3 span {
  width: 94px;
  line-height: 42px;
  background: #12b5e5;
  color: #fff;
  font-size: 11px;
  font-weight: 700;
}

.t4 {
  font-style: italic;
  color: #2f5f9f;
}

.gallery-scroll {
  display: flex;
  flex-direction: column;
  width: 15px;
  margin-left: auto;
}

.gallery-scroll button {
  flex: 1;
  border-left: 1px solid #c8c8c8;
  border-bottom: 1px solid #c8c8c8;
}

.gallery-scroll button:last-child {
  border-bottom: none;
}

.gallery-scroll :disabled {
  color: #bbb;
}

.flip {
  transform: rotate(180deg);
}

.collapse {
  align-self: flex-end;
  width: 30px;
  height: 26px;
  margin-left: 56px;
}

/* Zona de trabajo */
.workspace {
  display: flex;
  flex: 1;
  min-height: 0;
}

.nav-pane {
  width: 350px;
  flex: none;
  border-right: 1px solid #d0d0d0;
  overflow: hidden;
  font-family: "Noto Sans", sans-serif;
  font-size: 11px;
}

.nav-head {
  display: flex;
  align-items: center;
  height: 50px;
  padding: 0 17px 0 14px;
}

.nav-head h2 {
  flex: 1;
  margin: 0;
  padding-bottom: 2px;
  font-size: 20px;
  font-weight: 400;
  color: #333;
}

.nav-head button {
  width: 12px;
  height: 30px;
  margin-left: 30px;
  padding-bottom: 8px;
}

.nav-search {
  display: flex;
  align-items: center;
  gap: 3px;
  width: 317px;
  height: 24px;
  margin: 1px 0 0 14px;
  padding: 0 2px 0 6px;
  border: 1px solid #8a8a8a;
  background: #fff;
}

.nav-tabs {
  display: flex;
  gap: 25px;
  margin: 15px 0 10px 14px;
  line-height: 29px;
}

.nav-tabs .active {
  color: #1b5a96;
  font-weight: 700;
  border-bottom: 2px solid #1b4f8f;
}

.tree {
  margin: 0;
  padding: 0;
  list-style: none;
  color: #3a3a3a;
}

.tree li {
  position: relative;
  display: flex;
  height: 21px;
  line-height: 20px;
  white-space: nowrap;
}

.tree .l1 {
  padding-left: 30px;
}

.tree .l2 {
  padding-left: 46px;
}

.tree .l3 {
  padding-left: 62px;
}

.tree a {
  padding-left: 5px;
}

.open::before {
  content: "";
  position: absolute;
  top: 6px;
  margin-left: -11px;
  border-left: 7px solid transparent;
  border-bottom: 7px solid #333;
}

.current a {
  width: 272px;
  height: 20px;
  background: #b9d3f0;
}

.v-ruler {
  width: 24px;
  flex: none;
  border-right: 1px solid #d0d0d0;
}

.corner {
  display: flex;
  align-items: center;
  justify-content: center;
  height: 22px;
  border-bottom: 1px solid #d0d0d0;
}

.canvas {
  display: flex;
  flex-direction: column;
  align-items: center;
  flex: 1;
  min-width: 0;
}

.h-ruler {
  display: flex;
  justify-content: center;
  width: 100%;
  height: 22px;
  flex: none;
  border-bottom: 1px solid #d0d0d0;
}

.ruler-num {
  font-size: 9px;
  fill: #444;
  text-anchor: middle;
}

.page {
  flex: 1;
  width: 1240px;
  min-height: 0;
  overflow: hidden;
  padding: 74px 0 0 221px;
  border: solid #c8c8c8;
  border-width: 0 1px;
  background: #fff;
}

.page h1,
.page h3,
.page .unit {
  width: 852px;
  margin: 0;
  text-align: center;
  font-family: "Noto Sans", sans-serif;
}

.page h3 {
  line-height: 20px;
  font-size: 15px;
  font-weight: 600;
  color: #6d6e71;
}

.page h1 {
  line-height: 25px;
  font-size: 19px;
  font-weight: 700;
  color: #1d4a8f;
}

.page .unit {
  line-height: 16px;
  font-size: 15px;
  color: #555;
}

.charts {
  display: block;
  margin-top: 3px;
  overflow: visible;
  font-family: "Noto Sans", sans-serif;
  font-size: 15px;
  fill: #4d4d4f;
}

.charts .country {
  font-size: 15px;
  font-weight: 700;
  fill: #1a1a1a;
  text-anchor: middle;
}

.charts .end {
  text-anchor: end;
}

.charts .legend {
  font-size: 12px;
}

.charts .axis {
  stroke: #222;
  stroke-width: 2;
}

.charts polyline,
.charts .key {
  fill: none;
}

.total {
  stroke: #21478c;
  stroke-width: 2;
}

.core {
  stroke: #e4626f;
  stroke-width: 2;
  stroke-dasharray: 8 6;
}

.range {
  stroke: #222;
  stroke-width: 2;
  stroke-dasharray: 9 5;
}

.energy {
  stroke: #e5a020;
  stroke-width: 3;
  stroke-dasharray: 3 3;
}

.food {
  stroke: #16995a;
  stroke-width: 3;
  stroke-linejoin: round;
}

.notes {
  width: 820px;
  margin: 7px 0 0 16px;
  font-family: "Noto Sans", sans-serif;
  font-size: 12px;
  line-height: 16px;
  color: #4d4d4f;
  text-align: justify;
}

.notes p {
  margin: 0;
}

.scrollbar {
  display: flex;
  flex-direction: column;
  align-items: center;
  width: 18px;
  padding: 26px 0 4px;
}

.thumb {
  width: 10px;
  height: 16px;
  margin-top: 141px;
  border-radius: 5px;
  background: #666;
}

.down {
  margin-top: auto;
}

/* Barra de estado */
.status {
  display: flex;
  align-items: center;
  flex: none;
  height: 22px;
  padding: 0 8px;
  background: #f3f3f3;
  font-size: 11px;
  white-space: nowrap;
}

.s-page {
  width: 106px;
}

.s-words {
  width: 96px;
}

.s-lang {
  width: 138px;
}

.s-pred {
  width: 177px;
}

.s-acc {
  display: flex;
  align-items: center;
  gap: 4px;
}

.views {
  display: flex;
  align-items: center;
  height: 22px;
  margin-left: auto;
}

.focus {
  gap: 3px;
  margin-right: 12px;
}

.view {
  width: 40px;
  height: 22px;
}

.on {
  background: #dedede;
}

.step {
  width: 19px;
  font-size: 16px;
}

.pct {
  width: 34px;
  justify-content: flex-end;
}

.zoom {
  appearance: none;
  width: 100px;
  height: 14px;
  margin: 0;
  background: linear-gradient(#777, #777) center / 1px 6px no-repeat, linear-gradient(#777, #777) center / 100% 1px no-repeat;
}

.zoom::-webkit-slider-thumb {
  appearance: none;
  width: 5px;
  height: 11px;
  background: #555;
}

/* Barra de tareas */
.taskbar {
  display: flex;
  flex: none;
  height: 40px;
  background: #36312f;
  color: #fff;
}

.start {
  width: 48px;
}

.task-search {
  display: flex;
  align-items: center;
  gap: 11px;
  width: 288px;
  padding-left: 12px;
  background: #f2f2f2;
  color: #222;
  font-size: 14px;
}

.task-search input::placeholder {
  color: #222;
}

.marmot {
  align-self: flex-end;
}

.apps {
  display: flex;
}

.app {
  position: relative;
  width: 49px;
}

.running::after {
  content: "";
  position: absolute;
  left: 4px;
  right: 4px;
  bottom: 0;
  height: 2px;
  background: #e5a583;
}

.focused {
  background: #5b5654;
}

.focused::after {
  left: 0;
  right: 0;
}

.logo {
  font-size: 12px;
  font-weight: 700;
  text-anchor: middle;
}

.tray {
  display: flex;
  align-items: center;
  margin-left: auto;
  white-space: nowrap;
}

.weather {
  margin-left: 6px;
  font-size: 13px;
}

.desc {
  margin-left: 9px;
}

.up {
  margin-left: 17px;
}

.meet {
  margin-left: 12px;
}

.wifi {
  margin-left: 12px;
}

.vol {
  margin-left: 7px;
}

.lang {
  margin-left: 12px;
}

.clock {
  width: 88px;
  line-height: 18px;
  text-align: center;
}

.notif {
  position: relative;
  width: 41px;
  height: 24px;
  border-right: 1px solid #777;
  margin-right: 3px;
}

.notif b {
  position: absolute;
  left: 8px;
  top: 8px;
  width: 20px;
  height: 17px;
  line-height: 15px;
  border: 1px solid #999;
  border-radius: 9px;
  background: #36312f;
  font-size: 11px;
  font-weight: 400;
  text-align: center;
}
```
FILE: script.js
```js
// Reglas: 59 px por centímetro
const CM = 59;

function rulerMarks(from, to, draw) {
  for (let q = from; q <= to; q++) {
    draw(q, q % 4 === 0 ? 'num' : q % 2 === 0 ? 'half' : 'quarter');
  }
}

let h = '<rect x="29" y="3" width="1155" height="11" fill="#fff"/>';
rulerMarks(-2, 81, (q, kind) => {
  const x = 30 + q * CM / 4;
  if (kind === 'num') {
    if (q > 0 && q < 80) h += `<text class="ruler-num" x="${x}" y="12">${q / 4}</text>`;
  } else {
    const len = kind === 'half' ? 3 : 1;
    h += `<path d="M${x} ${9 - len}v${len * 2}" stroke="#666"/>`;
  }
});
// marcadores de sangría
h += '<path d="M152.500 .500h11v4l-5.500 4 5.500 4v8h-11v-8l5.500-4-5.500-4zM152.500 14.500h11" fill="#fff" stroke="#777"/>';
h += '<path d="M1179.500 15.500v-4l5-4 5 4v4z" fill="#fff" stroke="#777"/>';
document.getElementById('rulerH').innerHTML = h;

let v = '<rect x="4" y="51" width="14" height="765" fill="#fff"/>';
rulerMarks(-3, 52, (q, kind) => {
  const y = 50 + q * CM / 4;
  if (kind === 'num') {
    if (q > 0) v += `<text class="ruler-num" transform="translate(15 ${y}) rotate(-90)">${q / 4}</text>`;
  } else {
    const len = kind === 'half' ? 3 : 1;
    v += `<path d="M${12 - len} ${y}h${len * 2}" stroke="#666"/>`;
  }
});
document.getElementById('rulerV').innerHTML = v;

// Gráficos: 35 meses por país, Ene.20 - Nov.22
const countries = ['Brasil', 'Chile', 'Colombia', 'México', 'Perú'];

const total = [
  [4.2,4.0,3.3,2.4,1.9,2.1,2.3,2.4,3.1,3.9,4.3,4.5,4.6,5.2,6.1,6.8,8.1,8.4,9.0,9.7,10.3,10.7,10.7,10.1,10.4,10.5,11.3,12.1,11.7,11.9,10.1,8.7,7.2,6.5,5.9],
  [3.5,3.9,3.8,3.5,2.8,2.7,2.6,2.5,3.1,3.0,2.8,3.0,3.1,2.9,2.9,3.3,3.6,3.8,4.6,4.8,5.3,6.0,6.7,7.2,7.7,7.8,9.4,10.5,11.5,12.4,13.1,14.1,13.7,12.8,13.3],
  [3.6,3.7,3.8,3.5,2.8,2.2,2.0,1.9,2.0,1.7,1.5,1.6,1.6,1.5,1.5,1.9,3.3,3.6,4.0,4.4,4.5,4.6,5.3,5.6,6.9,8.0,8.5,9.2,9.1,9.7,10.2,10.8,11.4,12.2,12.5],
  [3.3,3.7,3.3,2.1,2.8,3.3,3.6,4.0,4.1,4.1,3.4,3.3,3.5,3.8,4.7,6.1,6.0,5.9,5.9,5.7,6.0,6.3,7.4,7.3,7.1,7.3,7.5,7.7,7.7,8.0,8.2,8.7,8.7,8.4,7.8],
  [2.0,2.0,1.9,1.8,1.8,1.7,1.9,1.8,1.9,1.9,2.2,2.1,2.8,2.6,2.7,2.5,2.5,3.4,4.0,5.1,5.4,5.9,5.8,6.7,5.8,6.3,6.9,8.0,8.1,8.8,8.7,8.4,8.5,8.3,8.4]
];

const core = [
  [3.3,3.2,3.0,2.7,2.3,2.1,1.9,1.5,1.4,1.7,2.1,2.5,2.7,2.8,2.9,3.4,4.1,5.0,5.7,6.4,7.1,7.5,7.6,7.4,8.1,8.8,9.2,9.4,9.4,9.4,9.1,9.0,8.6,8.3,8.0],
  [2.6,2.8,2.7,2.5,2.1,2.1,2.1,2.0,2.2,2.3,2.5,2.6,2.7,2.5,2.6,2.9,3.1,3.3,3.5,3.8,4.2,4.9,5.7,6.4,7.0,6.7,7.2,8.0,8.8,9.5,10.2,10.8,10.4,9.3,9.5],
  [3.6,3.6,3.7,3.3,2.6,2.2,2.1,2.2,2.4,2.1,2.0,1.9,1.8,1.7,1.6,2.0,3.0,3.3,3.7,4.0,3.9,3.8,4.2,4.5,5.8,6.8,7.4,8.0,8.4,8.8,9.2,9.7,10.3,10.9,11.1],
  [3.7,3.7,3.7,3.7,3.7,3.7,3.8,4.0,4.1,4.0,3.9,3.8,3.8,3.9,4.1,4.2,4.4,4.6,4.8,5.0,5.2,5.5,5.9,6.2,6.5,6.8,7.2,7.5,7.7,7.8,8.1,8.4,8.5,8.6,8.5],
  [2.4,2.4,2.0,2.0,2.0,2.0,1.9,1.9,1.9,1.9,1.8,1.8,1.7,1.7,1.8,1.9,1.9,2.1,2.3,2.6,2.8,3.0,3.2,3.4,3.3,3.2,3.6,4.0,4.4,5.0,5.4,5.6,5.7,5.8,5.9]
];

const food = [
  [6,5.5,5.2,6,6.8,7.6,7.9,9,12,14,15.8,14.4,15.1,15.1,14,12.7,12.7,12.7,13,13.8,13,12,9.5,8.5,8.2,9,11,13.4,13.8,14,14.7,13.5,12,11.5,11.9],
  [5.5,6.3,6.4,6.8,6.8,6.7,6.9,6.7,8.5,8.2,7.4,7.9,8.1,7.2,6,5.4,5.1,5,4.9,5,5.2,5.4,5.4,5.6,6.3,8.5,13,15,17,18.5,19.5,21.3,21.6,22,23.7],
  [5.5,6.5,7.7,8.3,8,7,5.8,5,4.6,4,4,4.6,5.3,5.5,4.8,4.2,9.3,9,10.5,12,13,15,16.5,18.5,21,23.5,25,25.8,21.5,23.2,24.3,25,26,26.6,26.7],
  [3.8,5.8,7,7,7.6,7.2,6.5,7.5,8,8.1,7.2,6.1,5.2,4.5,5,5.6,6.2,7,7.7,8.4,9,9.2,11.2,12,12.5,13,12.8,12.5,13.2,14,14.2,14.5,14.7,14.5,12.6],
  [1.5,2,2.3,2.1,2.2,2,2.4,2,2.3,2.2,2.8,2.9,3.6,3.1,2.8,2.5,2.4,3.5,4.5,6,7,7.5,7,7.8,7.1,8,9.2,11.6,11.3,11.8,11.6,11.6,11.5,11.6,11.9]
];

const energy = [
  [4.4,2.6,2.6,1.8,-0.5,0,-1,-3.2,-3,-0.5,-1.5,9.2,4.4,6.3,7.5,8.2,13.6,16.3,21.7,23.3,29.7,31,33,24.4,27.6,27.8,28.7,23.3,11.4,8,-3.1,-5.3,-9.6,-11,-12],
  [8.6,10,10,6,0,-0.8,-1.4,-2.5,-1.9,-4,-4,-5,-4.2,-2,0.5,4,6,9,12.5,14.8,15.5,18,20.2,19.5,18.5,17.5,18.8,20,20.8,20.8,22.5,23.9,23.9,21.3,21.3],
  [3.2,4,2.8,1,-1,-2.7,-3.2,-3,-2.4,-3.8,-4.3,-2.6,-1.7,-2,0,2,5,7,7.8,8.3,8,9,10.2,10,11,13,11.4,11.4,12.2,14,15.8,17.5,18.5,19,18.5],
  [0.8,0,-6,-14.7,-11,-4,0,0.2,0,-0.5,-2.8,-2.5,2.5,7,14.5,27.6,21,17,14.3,10,11.7,15.5,11,6,5,5.2,6,6.5,6,5,8.5,6,3.5,2.5,2.5],
  [3.1,1.8,0.5,0,-1,-1,-0.8,0.5,2.3,0.8,1.3,2,5,7.5,9.5,11,11.3,13,18,20.3,18,21.5,22.8,24.2,20,19.5,21.3,19.5,22,23.3,19,15,13.5,11,10]
];

const flat = (n) => Array(35).fill(n);
const steps = (a, b, c) => [...Array(12).fill(a), ...Array(12).fill(b), ...Array(11).fill(c)];
const rangeHigh = [steps(5.5, 5.25, 5), flat(4), flat(4), flat(4), flat(3)];
const rangeLow = [steps(2.5, 2.25, 2), flat(2), flat(2), flat(2), flat(1)];

const tickNames = ['Ene.20', 'Ago.20', 'Mar.21', 'Oct.21', 'May.22', '', 'Jun.20', 'Ene.21', 'Ago.21',
  'Mar.22', 'Oct.22', 'Abr.20', 'Nov.20', 'Jun.21', 'Ene.22', 'Ago.22', 'Feb.20', 'Set.20', 'Abr.21',
  'Nov.21', 'Jun.22', '', 'Jul.20', 'Feb.21', 'Set.21', 'Abr.22', 'Nov.22'];

const X0 = 48;
const MONTH = 4.228;

function series(data, cls, y) {
  return data.map((values, c) => {
    const pts = values.map((n, m) => `${(X0 + (c * 37 + m + 0.5) * MONTH).toFixed(1)},${y(n).toFixed(1)}`);
    return `<polyline class="${cls}" points="${pts.join(' ')}"/>`;
  }).join('');
}

function axes(opts) {
  const { y, min, max, step, titleY, labelY } = opts;
  let out = `<path class="axis" d="M${X0} ${y(max)}V${y(min)}M${X0} ${y(0)}H822"/>`;
  for (let n = min; n <= max; n += step) {
    out += `<path class="axis" d="M${X0 - 4} ${y(n)}h4"/><text class="end" x="38" y="${y(n) + 6}">${n}</text>`;
  }
  tickNames.forEach((name, k) => {
    const x = X0 + k * 7 * MONTH;
    out += `<path class="axis" d="M${x} ${y(0) - 2}v5"/>`;
    out += `<text class="end" transform="translate(${x + 6} ${labelY}) rotate(-90)">${name}</text>`;
  });
  countries.forEach((name, c) => {
    out += `<text class="country" x="${126 + c * 156.3}" y="${titleY}">${name}</text>`;
  });
  return out;
}

const yTop = (n) => 233 - n * 11.44;
const yBottom = (n) => 455 - n * 3.1;

let svg = axes({ y: yTop, min: 0, max: 16, step: 2, titleY: 44, labelY: 242 });
svg += series(rangeHigh, 'range', yTop) + series(rangeLow, 'range', yTop);
svg += series(core, 'core', yTop) + series(total, 'total', yTop);

[['8,0', 196, 148], ['5,9', 197, 170], ['13,3', 347, 79], ['9,5', 350, 118], ['12,5', 507, 90],
  ['11,1', 507, 113], ['8,5', 663, 135], ['7,8', 664, 154], ['8,4', 821, 138], ['5,7', 822, 174]
].forEach(([t, x, y]) => {
  svg += `<text x="${x}" y="${y}">${t}</text>`;
});

svg += axes({ y: yBottom, min: -20, max: 40, step: 10, titleY: 327, labelY: 527 });
svg += series(energy, 'energy', yBottom) + series(food, 'food', yBottom);

[['Inflación total', 'total', 58, 88], ['Inflación subyacente', 'core', 195, 225],
  ['Rango meta de inflación', 'range', 391, 421], ['Energía', 'energy', 592, 622], ['Alimentos', 'food', 702, 731]
].forEach(([name, cls, x, tx]) => {
  svg += `<path class="key ${cls}" d="M${x} 597h25"/><text class="legend" x="${tx}" y="601">${name}</text>`;
});

document.getElementById('charts').innerHTML = svg;
```
